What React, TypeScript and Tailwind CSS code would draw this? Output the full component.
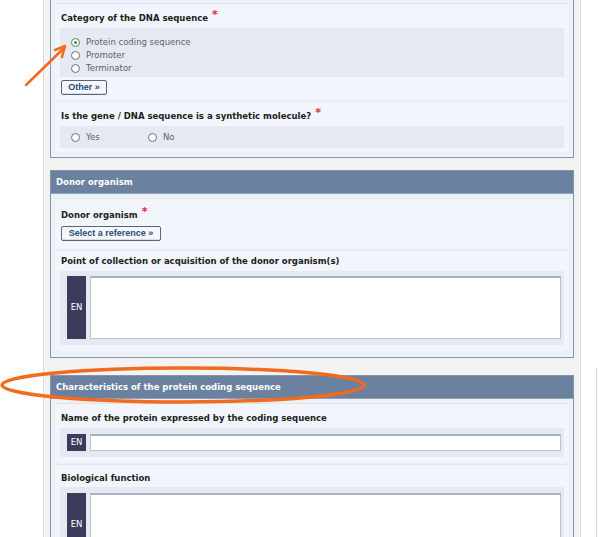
import React from "react";

const font = { fontFamily: '"DejaVu Sans", Verdana, sans-serif' };
const btnFont = { fontFamily: '"Liberation Sans", Arial, sans-serif' };

function Star() {
  return <span className="text-[#e8262b] text-[11px] font-bold ml-[4px] relative -top-[3px]">*</span>;
}

function Radio({ checked, label, className = "" }: { checked?: boolean; label: string; className?: string }) {
  return (
    <div className={"flex items-center h-[13px] " + className}>
      <span className={"w-[9px] h-[9px] rounded-full border bg-white flex items-center justify-center " + (checked ? "border-[#5f7f63]" : "border-[#6f6f6f]")}>
        {checked && <span className="w-[3px] h-[3px] rounded-full bg-[#2fa33a]" />}
      </span>
      <span className="ml-[6px] text-[8.5px] text-[#5f5f5f] leading-none">{label}</span>
    </div>
  );
}

function Button({ children, w }: { children: React.ReactNode; w: string }) {
  return (
    <div
      className={"h-[15px] rounded-[2px] border border-[#56667c] bg-[#f5f7fa] shadow-[inset_0_-1px_0_#d6dce5] flex items-center justify-center text-[9px] font-bold text-[#234a7a] leading-none " + w}
      style={btnFont}
    >
      {children}
    </div>
  );
}

function Header({ children }: { children: React.ReactNode }) {
  return (
    <div className="h-[23px] bg-[#6a819f] border-b border-[#8fa1b8] flex items-center pl-[5px] text-[8.5px] font-bold text-white">
      {children}
    </div>
  );
}

function Label({ children, cls }: { children: React.ReactNode; cls: string }) {
  return (
    <div className={"flex items-center pl-[1px] text-[8.5px] font-bold text-[#1c1c1c] " + cls}>{children}</div>
  );
}

function EN({ h }: { h: string }) {
  return (
    <div className={"w-[19px] bg-[#3c3b5c] flex items-center justify-center text-[8.5px] text-white " + h}>EN</div>
  );
}

export default function App() {
  return (
    <div className="relative w-[600px] h-[537px] bg-white overflow-hidden" style={font}>
      <div className="ml-[43px] w-[538px] h-[537px] bg-[#f3f3f3] border-l border-r border-[#dcdcdc] px-[6px] flex flex-col">
        {/* Panel 1 */}
        <div className="border-x border-b border-[#8795a8] bg-[#edf1f8] px-[4px] pt-[3px] pb-[5px] flex flex-col gap-[2px]">
          <div className="bg-[#f2f5fb] border-t border-[#e1e6ee] px-[5px] h-[96px] flex flex-col">
            <Label cls="h-[24px] pt-[5px]">
              Category of the DNA sequence<Star />
            </Label>
            <div className="bg-[#e5eaf2] h-[49px] pl-[11px] pt-[8px] flex flex-col">
              <Radio checked label="Protein coding sequence" />
              <Radio label="Promoter" />
              <Radio label="Terminator" />
            </div>
            <div className="mt-[3px] pl-[1px]">
              <Button w="w-[46px]">Other »</Button>
            </div>
          </div>
          <div className="bg-[#f2f5fb] border-t border-[#e1e6ee] px-[5px] h-[51px] flex flex-col">
            <Label cls="h-[24px] pt-[5px]">
              Is the gene / DNA sequence is a synthetic molecule?<Star />
            </Label>
            <div className="bg-[#e5eaf2] h-[22px] pl-[11px] flex items-center">
              <Radio label="Yes" className="w-[77px]" />
              <Radio label="No" />
            </div>
          </div>
        </div>

        {/* Panel 2 */}
        <div className="mt-[12px] border border-[#8795a8] bg-[#edf1f8]">
          <Header>Donor organism</Header>
          <div className="px-[4px] pt-[4px] pb-[6px] flex flex-col gap-[2px]">
            <div className="bg-[#f2f5fb] border-t border-[#e1e6ee] px-[5px] h-[50px] flex flex-col">
              <Label cls="h-[27px] pt-[6px]">
                Donor organism<Star />
              </Label>
              <div className="pl-[1px]">
                <Button w="w-[100px]">Select a reference »</Button>
              </div>
            </div>
            <div className="bg-[#f2f5fb] border-t border-[#e1e6ee] px-[5px] pb-[6px] flex flex-col">
              <Label cls="h-[20px]">
                Point of collection or acquisition of the donor organism(s)
              </Label>
              <div className="bg-[#e5eaf2] pl-[7px] pr-[3px] pt-[5px] pb-[6px] flex gap-[4px]">
                <EN h="h-[63px]" />
                <div className="flex-1 h-[63px] bg-white border border-[#b9c2ce] border-t-2 border-t-[#a8b2bf]" />
              </div>
            </div>
          </div>
        </div>

        {/* Panel 3 */}
        <div className="mt-[17px] border border-[#8795a8] bg-[#edf1f8] flex-1">
          <Header>Characteristics of the protein coding sequence</Header>
          <div className="px-[4px] pt-[4px] flex flex-col gap-[2px]">
            <div className="bg-[#f2f5fb] border-t border-[#e1e6ee] px-[5px] pb-[5px] flex flex-col">
              <Label cls="h-[24px] pt-[5px]">
                Name of the protein expressed by the coding sequence
              </Label>
              <div className="bg-[#e5eaf2] pl-[7px] pr-[3px] pt-[6px] pb-[6px] flex gap-[4px]">
                <EN h="h-[17px]" />
                <div className="flex-1 h-[17px] bg-white border border-[#b9c2ce] border-t-2 border-t-[#a8b2bf]" />
              </div>
            </div>
            <div className="bg-[#f2f5fb] border-t border-[#e1e6ee] px-[5px] flex flex-col">
              <Label cls="h-[22px] pt-[5px]">
                Biological function
              </Label>
              <div className="bg-[#e5eaf2] pl-[7px] pr-[3px] pt-[6px] pb-[6px] flex gap-[4px]">
                <EN h="h-[63px]" />
                <div className="flex-1 h-[63px] bg-white border border-[#b9c2ce] border-t-2 border-t-[#a8b2bf]" />
              </div>
            </div>
          </div>
        </div>
      </div>

      {/* right scrollbar edge */}
      <div className="absolute left-[596px] top-[368px] w-[1px] h-[169px] bg-[#d6d6d6]" />

      {/* annotations */}
      <svg className="absolute left-0 top-0" width="600" height="537" viewBox="0 0 600 537">
        <line x1="26" y1="85" x2="64" y2="48" stroke="#f26b1d" strokeWidth="2.5" strokeLinecap="round" />
        <polyline points="55,50 65,46 62,57" fill="none" stroke="#f26b1d" strokeWidth="2.5" strokeLinecap="round" strokeLinejoin="round" />
        <ellipse cx="183" cy="385" rx="181" ry="17" fill="none" stroke="#f26b1d" strokeWidth="3.5" />
      </svg>
    </div>
  );
}
